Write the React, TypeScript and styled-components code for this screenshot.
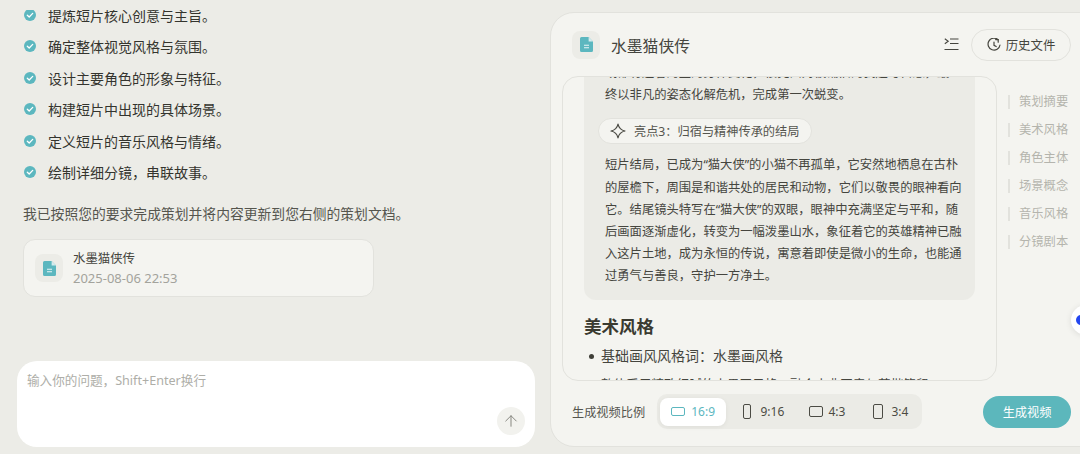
import React from "react";
import styled, { createGlobalStyle } from "styled-components";
import { ArrowUp } from "lucide-react";

const GlobalStyle = createGlobalStyle`
  html, body {
    margin: 0;
    padding: 0;
    height: 100%;
    background: #ecece7;
    overflow: hidden;
  }
  * { box-sizing: border-box; }
  body {
    font-family: "Noto Sans", "Noto Sans CJK SC", sans-serif;
    color: #3f3f38;
  }
`;

const tasks = [
  "提炼短片核心创意与主旨。",
  "确定整体视觉风格与氛围。",
  "设计主要角色的形象与特征。",
  "构建短片中出现的具体场景。",
  "定义短片的音乐风格与情绪。",
  "绘制详细分镜，串联故事。",
];

const outline = ["策划摘要", "美术风格", "角色主体", "场景概念", "音乐风格", "分镜剧本"];

const ratios = [
  { label: "16:9", w: 14, h: 9, gap: 6, active: true },
  { label: "9:16", w: 8, h: 15, gap: 9 },
  { label: "4:3", w: 14, h: 11, gap: 5 },
  { label: "3:4", w: 10, h: 15, gap: 8 },
];

const CheckIcon = () => (
  <svg width="12" height="12" viewBox="0 0 12 12">
    <circle cx="6" cy="6" r="6" fill="#5cb7bf" />
    <path d="M3.3 6.2l1.9 1.8 3.5-3.6" fill="none" stroke="#fff" strokeWidth="1.3" strokeLinecap="round" strokeLinejoin="round" />
  </svg>
);

const DocIcon = () => (
  <svg width="13" height="15" viewBox="0 0 13 15">
    <path d="M1.5 0H8.6L13 4.4V13.5A1.5 1.5 0 0 1 11.5 15H1.5A1.5 1.5 0 0 1 0 13.5V1.5A1.5 1.5 0 0 1 1.5 0Z" fill="#5cb7bf" />
    <path d="M8.6 0V4.4H13Z" fill="#d5ecee" />
    <path d="M4 8.2H9M4 10.8H9" stroke="#e8f5f6" strokeWidth="1.1" />
  </svg>
);

const SparkIcon = () => (
  <svg width="16" height="16" viewBox="0 0 16 16">
    <path d="M8 1C8.8 5 11 7.2 15 8C11 8.8 8.8 11 8 15C7.2 11 5 8.8 1 8C5 7.2 7.2 5 8 1Z" fill="none" stroke="#4b4b44" strokeWidth="1.2" strokeLinejoin="round" />
  </svg>
);

const OutlineToggleIcon = () => (
  <svg width="15" height="13" viewBox="0 0 15 13" fill="none" stroke="#45453e" strokeWidth="1.1">
    <path d="M0.8 0.8L4.2 3.3L0.8 5.8" />
    <path d="M6 1H14.5M6 5.5H14.5M0.5 11.5H14.5" />
  </svg>
);

const HistoryIcon = () => (
  <svg width="14" height="14" viewBox="0 0 14 14" fill="none" stroke="#45453e" strokeWidth="1.2" strokeLinecap="round">
    <path d="M11 1.6A6 6 0 1 0 13 7" />
    <path d="M8.6 1.6H11.2V4.2" />
    <path d="M7 4V7.3L9.2 8.5" />
  </svg>
);

const App: React.FC = () => {
  return (
    <Page>
      <GlobalStyle />
      <ChatColumn>
        <ChatScroll>
          <TaskList>
            {tasks.map((t) => (
              <TaskRow key={t}>
                <CheckIcon />
                <span>{t}</span>
              </TaskRow>
            ))}
          </TaskList>
          <Summary>我已按照您的要求完成策划并将内容更新到您右侧的策划文档。</Summary>
          <FileCard>
            <IconBox>
              <DocIcon />
            </IconBox>
            <FileMeta>
              <FileName>水墨猫侠传</FileName>
              <FileDate>2025-08-06 22:53</FileDate>
            </FileMeta>
          </FileCard>
        </ChatScroll>
        <InputBox>
          <Placeholder>输入你的问题，Shift+Enter换行</Placeholder>
          <SendButton>
            <ArrowUp size={18} strokeWidth={1.3} color="#85857e" />
          </SendButton>
        </InputBox>
      </ChatColumn>

      <DocPanel>
        <DocHeader>
          <TitleGroup>
            <IconBox>
              <DocIcon />
            </IconBox>
            <DocTitle>水墨猫侠传</DocTitle>
          </TitleGroup>
          <HeaderActions>
            <OutlineToggleIcon />
            <HistoryButton>
              <HistoryIcon />
              历史文件
            </HistoryButton>
          </HeaderActions>
        </DocHeader>

        <DocBody>
          <ScrollFrame>
            <ScrollContent>
              <GreyBlock>
                <BlockText>
                  或都有趣者的生的身体变化，很充面对被铺旧的我起与自怒，最
                  <br />
                  终以非凡的姿态化解危机，完成第一次蜕变。
                </BlockText>
                <HighlightPill>
                  <SparkIcon />
                  亮点3：归宿与精神传承的结局
                </HighlightPill>
                <BlockText>
                  短片结局，已成为“猫大侠”的小猫不再孤单，它安然地栖息在古朴
                  <br />
                  的屋檐下，周围是和谐共处的居民和动物，它们以敬畏的眼神看向
                  <br />
                  它。结尾镜头特写在“猫大侠”的双眼，眼神中充满坚定与平和，随
                  <br />
                  后画面逐渐虚化，转变为一幅泼墨山水，象征着它的英雄精神已融
                  <br />
                  入这片土地，成为永恒的传说，寓意着即使是微小的生命，也能通
                  <br />
                  过勇气与善良，守护一方净土。
                </BlockText>
              </GreyBlock>
              <SectionTitle>美术风格</SectionTitle>
              <BulletRow>基础画风风格词：水墨画风格</BulletRow>
              <BulletNote>整体采用精致细腻的水墨画风格，融合古典写意与苦楷笔留</BulletNote>
            </ScrollContent>
          </ScrollFrame>
          <Outline>
            {outline.map((o) => (
              <OutlineItem key={o}>{o}</OutlineItem>
            ))}
          </Outline>
        </DocBody>

        <DocFooter>
          <RatioGroup>
            <RatioLabel>生成视频比例</RatioLabel>
            <Segmented>
              {ratios.map((r) => (
                <Segment key={r.label} $active={r.active} $gap={r.gap}>
                  <RatioShape $active={r.active} style={{ width: r.w, height: r.h }} />
                  {r.label}
                </Segment>
              ))}
            </Segmented>
          </RatioGroup>
          <GenerateButton>生成视频</GenerateButton>
        </DocFooter>
      </DocPanel>

      <FloatingDot />
    </Page>
  );
};

export default App;

const Page = styled.div`
  position: relative;
  width: 1080px;
  height: 454px;
  display: flex;
  overflow: hidden;
  background: #ecece7;
`;

const ChatColumn = styled.div`
  width: 550px;
  flex-shrink: 0;
  height: 100%;
  padding: 10px 15px 7px 17px;
  display: flex;
  flex-direction: column;
  justify-content: space-between;
`;

const ChatScroll = styled.div`
  height: 300px;
  overflow: hidden;
  padding-left: 6px;
`;

const TaskList = styled.div`
  margin-top: -11px;
  display: flex;
  flex-direction: column;
`;

const TaskRow = styled.div`
  height: 31.5px;
  display: flex;
  align-items: center;
  gap: 12px;
  padding-left: 1px;
  font-size: 14px;
  color: #34342e;
`;

const Summary = styled.p`
  margin: 10px 0 10px;
  height: 31px;
  line-height: 31px;
  font-size: 13.8px;
  color: #55554e;
`;

const FileCard = styled.div`
  width: 351px;
  height: 58px;
  padding: 0 11px;
  display: flex;
  align-items: center;
  gap: 10px;
  background: #f4f4f0;
  border: 1px solid #e2e2dd;
  border-radius: 12px;
`;

const IconBox = styled.div`
  width: 28px;
  height: 28px;
  border-radius: 8px;
  background: #ecece7;
  display: flex;
  align-items: center;
  justify-content: center;
  flex-shrink: 0;
`;

const FileMeta = styled.div`
  display: flex;
  flex-direction: column;
  gap: 1px;
`;

const FileName = styled.div`
  font-size: 12.4px;
  line-height: 18px;
  color: #45453e;
`;

const FileDate = styled.div`
  font-size: 13px;
  line-height: 18px;
  color: #a3a39c;
`;

const InputBox = styled.div`
  position: relative;
  height: 86px;
  background: #fff;
  border-radius: 20px;
  padding: 11px 10px;
`;

const Placeholder = styled.div`
  font-size: 12.6px;
  line-height: 17px;
  color: #aeaea8;
`;

const SendButton = styled.div`
  position: absolute;
  right: 10px;
  bottom: 12px;
  width: 28px;
  height: 28px;
  border-radius: 50%;
  background: #f2f2ee;
  display: flex;
  align-items: center;
  justify-content: center;
`;

const DocPanel = styled.section`
  width: 560px;
  flex-shrink: 0;
  height: 435px;
  margin-top: 12px;
  padding: 0 0 0 11px;
  background: #f4f4f0;
  border: 1px solid #e2e2dd;
  border-radius: 24px;
  display: flex;
  flex-direction: column;
`;

const DocHeader = styled.header`
  height: 63px;
  flex-shrink: 0;
  width: 509px;
  padding-left: 10px;
  display: flex;
  align-items: center;
  justify-content: space-between;
`;

const TitleGroup = styled.div`
  display: flex;
  align-items: center;
  gap: 11px;
`;

const DocTitle = styled.h1`
  margin: 0;
  padding-top: 2px;
  font-size: 15.8px;
  font-weight: 400;
  color: #45453e;
`;

const HeaderActions = styled.div`
  display: flex;
  align-items: center;
  gap: 12px;
`;

const HistoryButton = styled.div`
  width: 100px;
  height: 32px;
  display: flex;
  align-items: center;
  justify-content: center;
  gap: 5px;
  font-size: 12.4px;
  color: #45453e;
  border: 1px solid #e2e2dd;
  border-radius: 16px;
`;

const DocBody = styled.div`
  height: 305px;
  flex-shrink: 0;
  display: flex;
`;

const ScrollFrame = styled.div`
  width: 435px;
  height: 305px;
  flex-shrink: 0;
  overflow: hidden;
  border: 1px solid #e2e2dd;
  border-radius: 16px;
`;

const ScrollContent = styled.div`
  margin-top: -15px;
  padding: 0 21px;
`;

const GreyBlock = styled.div`
  background: #ebebe6;
  border-radius: 0 0 12px 12px;
  padding: 0 12px 12px 21px;
`;

const BlockText = styled.p`
  margin: 0;
  font-size: 12.3px;
  line-height: 22.2px;
  color: #45453e;
  white-space: nowrap;
`;

const HighlightPill = styled.div`
  width: 214px;
  height: 26px;
  margin: 12px 0 10px -7px;
  display: flex;
  align-items: center;
  gap: 8px;
  padding-left: 11px;
  font-size: 12.2px;
  color: #55554e;
  background: #f4f4f0;
  border: 1px solid #e2e2dd;
  border-radius: 13px;
`;

const SectionTitle = styled.h2`
  margin: 13px 0 0;
  font-size: 17.5px;
  line-height: 26px;
  font-weight: 700;
  color: #3a3a30;
`;

const BulletRow = styled.div`
  position: relative;
  margin-top: 6px;
  padding-left: 17px;
  font-size: 14px;
  line-height: 22px;
  color: #45453e;
  &::before {
    content: "";
    position: absolute;
    left: 5px;
    top: 9px;
    width: 5px;
    height: 5px;
    border-radius: 50%;
    background: #3f3f38;
  }
`;

const BulletNote = styled.div`
  margin-top: 7px;
  padding-left: 17px;
  font-size: 12.6px;
  line-height: 22px;
  color: #45453e;
  white-space: nowrap;
`;

const Outline = styled.nav`
  margin-left: 11px;
  padding-top: 19px;
  display: flex;
  flex-direction: column;
  gap: 14px;
`;

const OutlineItem = styled.div`
  height: 14px;
  line-height: 14px;
  padding-left: 9px;
  font-size: 12.3px;
  color: #b4b4ad;
  border-left: 2px solid #e2e2dd;
  white-space: nowrap;
`;

const DocFooter = styled.footer`
  flex: 1;
  width: 509px;
  padding: 0 0 4px 10px;
  display: flex;
  align-items: center;
  justify-content: space-between;
`;

const RatioGroup = styled.div`
  display: flex;
  align-items: center;
  gap: 12px;
`;

const RatioLabel = styled.span`
  font-size: 12.2px;
  color: #55554e;
`;

const Segmented = styled.div`
  width: 265px;
  height: 35px;
  padding: 3px;
  display: flex;
  align-items: center;
  background: #ebebe6;
  border-radius: 10px;
`;

const Segment = styled.div<{ $active?: boolean; $gap: number }>`
  height: 28px;
  width: ${({ $active }) => ($active ? "66px" : "63.5px")};
  margin-right: ${({ $active }) => ($active ? "6px" : "0")};
  flex-shrink: 0;
  display: flex;
  align-items: center;
  justify-content: center;
  gap: ${({ $gap }) => $gap}px;
  font-size: 12px;
  border-radius: 8px;
  color: ${({ $active }) => ($active ? "#5cb7bf" : "#4b4b44")};
  background: ${({ $active }) => ($active ? "#fff" : "transparent")};
  box-shadow: ${({ $active }) => ($active ? "0 1px 5px rgba(0,0,0,0.06)" : "none")};
`;

const RatioShape = styled.span<{ $active?: boolean }>`
  display: block;
  border: ${({ $active }) => ($active ? "1px" : "1.3px")} solid currentColor;
  border-radius: 2px;
`;

const GenerateButton = styled.div`
  width: 88px;
  height: 32px;
  display: flex;
  align-items: center;
  justify-content: center;
  font-size: 12.2px;
  color: #fff;
  background: #5cb7bc;
  border-radius: 16px;
`;

const FloatingDot = styled.div`
  position: absolute;
  left: 1071px;
  top: 305px;
  width: 30px;
  height: 30px;
  border-radius: 50%;
  background: #fff;
  box-shadow: 0 1px 6px rgba(0, 0, 0, 0.1);
  &::after {
    content: "";
    position: absolute;
    left: 5px;
    top: 10px;
    width: 10px;
    height: 10px;
    border-radius: 50%;
    background: #2346f0;
  }
`;
